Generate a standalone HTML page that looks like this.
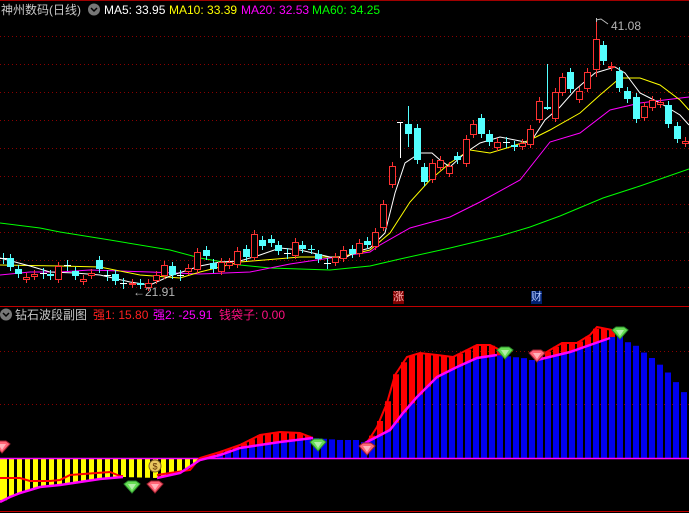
<!DOCTYPE html>
<html><head><meta charset="utf-8">
<style>
html,body{margin:0;padding:0;background:#000;width:689px;height:513px;overflow:hidden}
#wrap{position:relative;width:689px;height:513px;font-family:"Liberation Sans","Noto Sans CJK SC",sans-serif}
.t{position:absolute;font-size:12px;white-space:nowrap;line-height:14px}
svg{position:absolute;left:0;top:0}
</style></head><body><div id="wrap">
<svg id="s" width="689" height="513" viewBox="0 0 689 513"></svg>
<div class="t" style="left:1px;top:3px;color:#c8c8c8">神州数码(日线)</div>
<div class="t" style="left:104px;top:3px;color:#fff">MA5: 33.95</div>
<div class="t" style="left:169px;top:3px;color:#ffff00">MA10: 33.39</div>
<div class="t" style="left:241px;top:3px;color:#ff00ff">MA20: 32.53</div>
<div class="t" style="left:312px;top:3px;color:#00ff00">MA60: 34.25</div>
<div class="t" style="left:15px;top:308px;color:#c8c8c8">钻石波段副图</div>
<div class="t" style="left:93px;top:308px;color:#ff2020">强1: 15.80</div>
<div class="t" style="left:153px;top:308px;color:#ff00ff">强2: -25.91</div>
<div class="t" style="left:219px;top:308px;color:#ff1080">钱袋子: 0.00</div>
<div class="t" style="left:133px;top:285px;color:#b4b4b4;font-size:12px">←21.91</div>
<div class="t" style="left:611px;top:19px;color:#b4b4b4;font-size:12px">41.08</div>
<div class="t" style="left:393px;top:291px;color:#ffb0b0;background:#800000;font-size:11px;line-height:13px">涨</div>
<div class="t" style="left:531px;top:291px;color:#b0c8ff;background:#002070;font-size:11px;line-height:13px">财</div>
</div>
<script>
var s=document.getElementById('s'),h='';
function L(x1,y1,x2,y2,c,w,d){h+='<line x1="'+x1+'" y1="'+y1+'" x2="'+x2+'" y2="'+y2+'" stroke="'+c+'" stroke-width="'+(w||1)+'"'+(d?' stroke-dasharray="'+d+'"':'')+'/>';}
function R(x,y,w,hh,f,st){h+='<rect x="'+x+'" y="'+y+'" width="'+w+'" height="'+Math.max(hh,1)+'" fill="'+f+'"'+(st?' stroke="'+st+'"':'')+'/>';}
function P(pts,c,w){h+='<polyline fill="none" stroke="'+c+'" stroke-width="'+(w||1)+'" points="'+pts.map(function(p){return p.join(',')}).join(' ')+'"/>';}
[36,64,92,120,148,176,204,232,260,287].forEach(function(y){L(0,y+.5,689,y+.5,'#8a0000',1,'1,3');});
[351,404].forEach(function(y){L(0,y+.5,689,y+.5,'#8a0000',1,'1,3');});
L(0,0.5,689,0.5,'#a00000');
L(0,306.5,689,306.5,'#c00000');
L(0,511.5,689,511.5,'#c00000');
P([[0,223],[40,228],[60,232],[110,240],[170,250],[200,258],[240,265],[270,268],[330,270],[370,266],[400,259],[450,248],[500,236],[530,227],[560,216],[603,198],[640,186],[689,169]],'#00ff00');
P([[0,275],[30,272],[60,272],[90,270],[150,272],[200,274],[250,272],[290,264],[330,258],[370,252],[380,245],[410,228],[450,217],[480,202],[520,180],[550,142],[580,133],[610,110],[640,103],[689,97]],'#ff00ff');
P([[0,265],[60,266],[100,267],[140,275],[180,278],[200,272],[240,262],[300,257],[340,257],[370,250],[390,233],[410,202],[430,180],[450,163],[470,150],[490,153],[510,147],[530,140],[550,130],[580,113],[600,95],[620,78],[640,78],[660,85],[680,100],[689,110]],'#ffff00');
P([[0,258],[30,266],[50,272],[75,273],[100,275],[130,282],[150,285],[170,276],[200,266],[220,262],[240,261],[260,255],[280,248],[300,250],[330,257],[345,258],[355,252],[370,248],[385,233],[395,193],[405,163],[420,153],[432,153],[440,160],[450,167],[465,153],[480,143],[500,137],[515,140],[530,143],[545,120],[560,107],[575,90],[595,73],[615,67],[625,73],[640,93],[660,103],[680,115],[689,125]],'#ffffff');
var C=[[3,258,258,'x'],[10,258,267,'c'],[18,269,274,'c'],[26,277,279,'r'],[34,274,276,'r'],[43,273,273,'x'],[50,274,276,'c'],[58,266,279,'r'],[67,265,265,'x'],[75,271,276,'c'],[83,279,281,'r'],[91,273,275,'r'],[99,260,269,'c'],[107,275,275,'x'],[115,274,281,'c'],[123,283,283,'x'],[132,283,284,'r'],[140,283,285,'c'],[148,283,287,'r'],[156,275,280,'r'],[164,265,275,'r'],[172,266,275,'c'],[180,275,275,'x'],[188,268,271,'r'],[197,252,269,'r'],[206,250,256,'c'],[213,263,269,'c'],[221,262,271,'r'],[229,262,265,'r'],[237,251,264,'r'],[246,249,257,'c'],[254,234,257,'r'],[262,240,246,'c'],[271,239,243,'c'],[278,245,251,'c'],[287,253,253,'x'],[295,242,255,'r'],[302,245,249,'c'],[311,249,250,'c'],[318,254,259,'c'],[327,263,263,'x'],[335,257,262,'r'],[343,250,258,'r'],[352,249,254,'c'],[359,243,253,'r'],[367,241,245,'c'],[375,232,246,'r'],[383,204,227,'r'],[392,166,184,'r'],[400,122,122,'w'],[408,124,134,'c',106,147],[417,128,160,'c'],[424,167,182,'c'],[432,163,179,'r'],[440,160,167,'r'],[449,166,173,'r'],[457,156,160,'c'],[466,139,163,'r'],[473,124,134,'r'],[481,118,134,'c'],[489,134,142,'c'],[497,142,147,'r'],[506,142,142,'x'],[514,145,147,'c'],[522,143,146,'r'],[530,129,144,'r'],[539,101,119,'r'],[547,107,109,'c',64,110],[555,92,118,'r'],[562,77,92,'r'],[570,72,89,'c'],[579,91,99,'r'],[587,72,88,'r'],[596,39,69,'r',22,77],[603,45,61,'c'],[611,66,67,'r'],[619,71,88,'c'],[627,91,99,'c'],[636,97,119,'c'],[644,106,117,'r'],[652,100,107,'r'],[660,102,104,'r'],[668,105,124,'c'],[677,126,139,'c'],[685,141,143,'r']];
C.forEach(function(c){var x=c[0],t=c[1],b=c[2],k=c[3],hi=c[4]||t-4,lo=c[5]||b+4;
 if(k=='w'){L(x+.5,t,x+.5,158,'#fff');L(x-3,t+.5,x+3,t+.5,'#fff');return;}
 var col=(k=='r')?'#ff3232':'#54ffff';
 if(k=='x'){L(x+.5,t-5,x+.5,t+6,'#54ffff');L(x-3,t+.5,x+4,t+.5,'#fff');return;}
 L(x+.5,hi,x+.5,lo,col);
 if(k=='r')R(x-2.5,t+.5,6,b-t,'#000',col);else R(x-3,t,7,b-t,col);
});
L(596.5,18,596.5,22,'#bbb');P([[596,20],[601,19],[608,24]],'#bbb');
function f(pts,x){if(x<pts[0][0]||x>pts[pts.length-1][0])return null;for(var i=1;i<pts.length;i++){if(x<=pts[i][0]){var a=pts[i-1],b=pts[i];return a[1]+(b[1]-a[1])*(x-a[0])/((b[0]-a[0])||1);}}return null;}
var A1=[[0,478],[20,478],[30,481],[50,481],[60,480],[70,475],[110,472],[120,476],[123,476]];
var A1b=[[157,475],[190,470],[200,458],[220,452],[240,445],[260,435],[280,432],[300,433],[313,438]];
var A2=[[365,445],[370,438],[377,427],[387,403],[395,375],[407,357],[420,353],[437,355],[453,357],[467,350],[477,345],[490,345],[500,350]];
var A3=[[537,358],[550,350],[562,343],[577,343],[590,335],[597,327],[612,330]];
var M=[[0,502],[10,497],[20,493],[40,487],[60,485],[80,482],[100,479],[123,477],[157,478],[180,473],[200,460],[220,455],[240,448],[280,442],[313,438],[340,440],[360,440],[365,443],[390,430],[403,413],[417,397],[437,377],[457,367],[477,358],[497,355],[513,357],[523,358],[530,360],[537,360],[570,352],[590,345],[610,338],[618,333],[627,342],[636,346],[644,353],[653,359],[661,366],[669,374],[677,384],[685,394],[689,398]];
for(var i=0;i<86;i++){var x=1+8*i;var cx=x+2.5;
 var a=f(A1,cx);if(a===null)a=f(A1b,cx);if(a===null)a=f(A2,cx);if(a===null)a=f(A3,cx);
 var m=f(M,cx);
 if(m>458){R(i==0?0:x,458,i==0?7:5,m-458,'#ffff00');continue;}
 if(m<458)R(x,m,6,458-m,'#0000ee');
 if(a!==null&&a<Math.min(m,458)){R(x,a,6,Math.min(m,458)-a,'#ff0000');}
}
L(0,458.5,689,458.5,'#ff00ff',1.5);
P(A1,'#ff0000',2);P(A1b,'#ff0000',2);P(A2,'#ff0000',2);P(A3,'#ff0000',2);
P(M.filter(function(p){return p[0]<=123}),'#ff00ff',2.5);
P(M.filter(function(p){return p[0]>=157&&p[0]<=313}),'#ff00ff',2.5);
P(M.filter(function(p){return p[0]>=365&&p[0]<=500}),'#ff00ff',2.5);
P(M.filter(function(p){return p[0]>=537&&p[0]<=612}),'#ff00ff',2.5);
function gem(x,y,c,d){h+='<polygon points="'+(x-8)+','+(y-3)+' '+(x-4)+','+(y-6)+' '+(x+4)+','+(y-6)+' '+(x+8)+','+(y-3)+' '+x+','+(y+6)+'" fill="'+c+'" stroke="'+d+'"/>';h+='<polygon points="'+(x-4)+','+(y-3)+' '+(x+4)+','+(y-3)+' '+x+','+(y+3)+'" fill="#fff" opacity=".5"/>';}
gem(132,487,'#66dd55','#2a8a2a');gem(155,487,'#ff6677','#a02030');
gem(318,445,'#66dd55','#2a8a2a');gem(367,449,'#ff6677','#a02030');
gem(505,353,'#66dd55','#2a8a2a');gem(537,356,'#ff6677','#a02030');
gem(620,333,'#66dd55','#2a8a2a');gem(2,447,'#ff6677','#a02030');
h+='<circle cx="155" cy="466" r="6" fill="#e8c860" stroke="#806020"/><text x="155" y="469.5" font-size="9" text-anchor="middle" fill="#603000" font-family="Liberation Sans">$</text>';
h+='<circle cx="94" cy="9.5" r="6" fill="#777"/><polyline points="91,8 94,11 97,8" fill="none" stroke="#000" stroke-width="1.5"/>';
h+='<circle cx="6" cy="314.5" r="6" fill="#777"/><polyline points="3,313 6,316 9,313" fill="none" stroke="#000" stroke-width="1.5"/>';
s.innerHTML=h;
</script>
</body></html>
